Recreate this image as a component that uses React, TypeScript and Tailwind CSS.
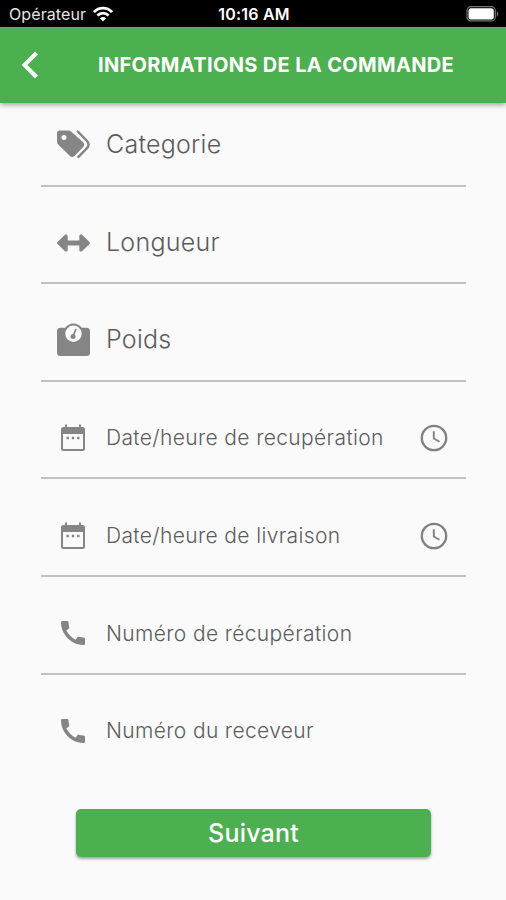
import type { ReactNode } from "react";
import { MdCall } from "react-icons/md";

function TagsIcon() {
  return (
    <svg width="33" height="33" viewBox="0 0 33 33" fill="none">
      <path
        fillRule="evenodd"
        fill="currentColor"
        d="M3 2.5h8.500c1 0 1.900.4 2.600 1.100L26.200 14.300c1.500 1.400 1.500 3.300.1 4.700l-8.700 8.900c-1.400 1.400-3.300 1.400-4.700 0L1.200 16.500C.4 15.700 0 14.800 0 13.700V5.500a3 3 0 0 1 3-3ZM7 7a2.500 2.500 0 1 0 0 5 2.500 2.500 0 0 0 0-5Z"
      />
      <path
        d="m20.800 3.500 8.900 9.200c2.400 2.500 2.400 5.200.1 7.600l-8.400 8.600"
        stroke="currentColor"
        strokeWidth="2.400"
        strokeLinecap="round"
      />
    </svg>
  );
}

function LengthIcon() {
  return (
    <svg className="mt-[2px]" width="33" height="18" viewBox="0 0 33 18" fill="currentColor">
      <path d="M.5 8 8 .8c1-.9 2.700-.3 2.700 1.200v4.500h11.600V2c0-1.500 1.700-2.100 2.700-1.200L32.500 8c.6.600.6 1.400 0 2L25 17.200c-1 .9-2.700.3-2.700-1.200v-4.500H10.700V16c0 1.500-1.700 2.100-2.700 1.200L.5 10c-.6-.6-.6-1.400 0-2Z" />
    </svg>
  );
}

function ScaleIcon() {
  return (
    <svg width="33" height="33" viewBox="0 0 33 33" fill="none">
      <path
        fill="currentColor"
        d="M3.500 4.800h4.700a10.200 10.200 0 0 1 16.600 0h4.700a3.500 3.500 0 0 1 3.500 3.500V29.500a3.500 3.500 0 0 1-3.500 3.500h-26A3.500 3.500 0 0 1 0 29.500V8.300a3.500 3.500 0 0 1 3.500-3.500Z"
      />
      <circle cx="16.500" cy="10.800" r="8.200" fill="#fafafa" />
      <circle cx="16" cy="13.400" r="2.500" fill="currentColor" />
      <path d="M16.300 12.800 18.700 6.500" stroke="currentColor" strokeWidth="1.700" strokeLinecap="round" />
    </svg>
  );
}

function CalendarIcon() {
  return (
    <svg className="-ml-[1px] mt-[1px]" width="32" height="32" viewBox="0 0 32 32" fill="none">
      <path d="M9 2.500V6M23 2.500V6" stroke="currentColor" strokeWidth="2" />
      <path
        fillRule="evenodd"
        fill="currentColor"
        d="M6.500 5h19A2.500 2.500 0 0 1 28 7.500v19a2.500 2.500 0 0 1-2.500 2.500h-19A2.500 2.500 0 0 1 4 26.500v-19A2.500 2.500 0 0 1 6.500 5ZM6 12v15h20V12Z"
      />
      <path d="M9.500 16h2.400M14.800 16h2.400M20.100 16h2.400" stroke="currentColor" strokeWidth="2.400" />
    </svg>
  );
}

function ClockIcon() {
  return (
    <svg className="mt-[1px] shrink-0 text-[#808080]" width="32" height="32" viewBox="0 0 32 32" fill="none" stroke="currentColor">
      <circle cx="16" cy="16" r="12.200" strokeWidth="2.300" />
      <path d="M15.800 9.300v7.200l5.700 3.300" strokeWidth="1.900" />
    </svg>
  );
}

type FieldProps = {
  icon: ReactNode;
  label: string;
  large?: boolean;
  clock?: boolean;
  last?: boolean;
};

function Field({ icon, label, large, clock, last }: FieldProps) {
  return (
    <div
      className={`flex h-[97.6px] items-center border-b-2 pt-[16px] pl-[16px] pr-[16px] ${
        last ? "border-transparent" : "border-[#c1c1c1]"
      }`}
    >
      <div className="flex w-[33px] shrink-0 justify-center text-[#858585]">{icon}</div>
      <span
        className={`ml-[16px] flex-1 whitespace-nowrap text-[#5c5c5c] font-light ${
          large ? "text-[25px] tracking-[0.25px]" : "pt-[1px] text-[21px] tracking-[0.36px]"
        }`}
      >
        {label}
      </span>
      {clock && <ClockIcon />}
    </div>
  );
}

export default function App() {
  return (
    <div className="flex h-[900px] w-[506px] flex-col overflow-hidden bg-[#fafafa] font-['Inter',sans-serif]">
      {/* Status bar */}
      <div className="grid h-[27px] shrink-0 grid-cols-3 items-center bg-black pr-[7px] pl-[9px] text-white">
        <div className="flex items-center gap-[7px]">
          <span className="text-[16px] tracking-[0.1px] text-[#e4e4e4]">Opérateur</span>
          <svg width="20" height="16" viewBox="0 0 20 16" fill="none" stroke="white" strokeWidth="2.800">
            <path d="M1 6.100C6 .9 14 .9 19 6.100" />
            <path d="M4.400 9.600c3.200-3.200 8-3.200 11.200 0" />
            <path d="M10 15.500 6.900 12.300c1.800-1.600 4.400-1.600 6.200 0Z" fill="white" stroke="none" />
          </svg>
        </div>
        <span className="text-center text-[16px] font-semibold tracking-[0.2px] whitespace-nowrap">10:16 AM</span>
        <svg className="justify-self-end" width="33" height="16" viewBox="0 0 33 16">
          <rect x="1" y=".7" width="28.300" height="14.200" rx="4" fill="none" stroke="#777" strokeWidth="1.200" />
          <rect x="2.500" y="2.200" width="25.300" height="11.200" rx="2.500" fill="white" />
          <path d="M30.800 5.300c2 1 2 4.400 0 5.400Z" fill="#777" />
        </svg>
      </div>

      {/* Header */}
      <header className="z-10 flex h-[76px] shrink-0 items-center bg-[#4caf50] text-white shadow-[0_2px_5px_rgba(0,0,0,0.35)]">
        <svg className="ml-[21px]" width="17" height="28" viewBox="0 0 17 28" fill="none" stroke="white" strokeWidth="4">
          <path d="M15.500 2 3.500 14l12 12" />
        </svg>
        <h1 className="ml-[60px] text-[20px] font-bold tracking-[0.34px] whitespace-nowrap">INFORMATIONS DE LA COMMANDE</h1>
      </header>

      {/* Form */}
      <main className="-mt-[14px] ml-[41px] w-[425px]">
        <Field icon={<TagsIcon />} label="Categorie" large />
        <Field icon={<LengthIcon />} label="Longueur" large />
        <Field icon={<ScaleIcon />} label="Poids" large />
        <Field icon={<CalendarIcon />} label="Date/heure de recupération" clock />
        <Field icon={<CalendarIcon />} label="Date/heure de livraison" clock />
        <Field icon={<MdCall size={32} className="mt-[1px] -ml-[1px]" />} label="Numéro de récupération" />
        <Field icon={<MdCall size={32} className="mt-[1px] -ml-[1px]" />} label="Numéro du receveur" last />
      </main>

      <button className="mt-[36.5px] ml-[76px] h-[48px] w-[355px] shrink-0 rounded-[5px] bg-[#4caf50] pt-[2px] text-[25px] font-medium tracking-[0.2px] text-white shadow-[0_2px_3px_rgba(0,0,0,0.35)]">
        Suivant
      </button>
    </div>
  );
}
